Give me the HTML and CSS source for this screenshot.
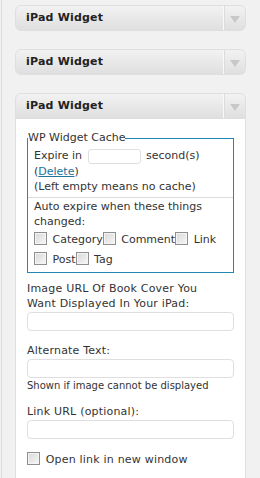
FILE: index.html
```html
<!DOCTYPE html>
<html lang="en">
<head>
    <meta charset="UTF-8">
    <title>iPad Widget</title>
    <link rel="stylesheet" href="styles.css">
</head>
<body>
    <div class="sidebar">
        <div class="widget">
            <div class="widget-top">
                <div class="widget-title">iPad Widget</div>
                <div class="widget-toggle"><span class="arrow"></span></div>
            </div>
        </div>

        <div class="widget">
            <div class="widget-top">
                <div class="widget-title">iPad Widget</div>
                <div class="widget-toggle"><span class="arrow"></span></div>
            </div>
        </div>

        <div class="widget open">
            <div class="widget-top">
                <div class="widget-title">iPad Widget</div>
                <div class="widget-toggle"><span class="arrow"></span></div>
            </div>
            <div class="widget-inside">
                <fieldset class="cache">
                    <legend>WP Widget Cache</legend>
                    <div class="cache-expire">
                        Expire in <input type="text" class="short"> second(s)<br>
                        (<a href="#">Delete</a>)<br>
                        (Left empty means no cache)
                    </div>
                    <div class="cache-auto">
                        Auto expire when these things changed:<br>
                        <label><input type="checkbox"> Category</label><label><input type="checkbox"> Comment</label><label><input type="checkbox"> Link</label>
                        <br>
                        <label><input type="checkbox"> Post</label><label><input type="checkbox"> Tag</label>
                    </div>
                </fieldset>

                <p class="field first">
                    <label>Image URL Of Book Cover You Want Displayed In Your iPad:</label>
                    <input type="text" class="wide">
                </p>
                <p class="field">
                    <label>Alternate Text:</label>
                    <input type="text" class="wide">
                    <small>Shown if image cannot be displayed</small>
                </p>
                <p class="field">
                    <label>Link URL (optional):</label>
                    <input type="text" class="wide">
                </p>
                <p class="field check">
                    <label><input type="checkbox"> Open link in new window</label>
                </p>
            </div>
        </div>
    </div>
</body>
</html>
```

FILE: styles.css
```css
body {
    margin: 0;
    background: #f1f1f1;
    font-family: 'DejaVu Sans', Verdana, sans-serif;
    font-size: 11px;
    color: #333;
}
.sidebar {
    border-left: 1px solid #dcdcdc;
    margin-left: 1px;
    padding: 5px 14px 0 13px;
    height: 473px;
    overflow: hidden;
}
.widget {
    margin-bottom: 18px;
}
.widget-top {
    display: flex;
    height: 24px;
    border: 1px solid #dfdfdf;
    border-radius: 6px;
    background: linear-gradient(to bottom, #f2f2f2, #dfdfdf);
}
.widget.open .widget-top {
    border-radius: 6px 6px 0 0;
}
.widget-title {
    flex: 1;
    padding-left: 10px;
    font-size: 11px;
    font-weight: bold;
    letter-spacing: 0.2px;
    line-height: 24px;
    color: #222;
}
.widget-toggle {
    width: 21px;
    border-left: 1px solid #f9f9f9;
    box-shadow: inset 1px 0 0 #dcdcdc;
    display: flex;
    align-items: center;
    justify-content: center;
}
.arrow {
    width: 0;
    height: 0;
    border-left: 5px solid transparent;
    border-right: 5px solid transparent;
    border-top: 7px solid #c8c8c8;
    margin-top: 2px;
}
.widget-inside {
    background: #fff;
    border: 1px solid #dfdfdf;
    border-top: none;
    padding: 12px 11px 10px;
    min-height: 340px;
}
fieldset.cache {
    border: 1px solid #2387b4;
    margin: 0;
    padding: 0;
}
fieldset.cache legend {
    padding: 0;
    margin-left: 0;
    line-height: 14px;
}
.cache-expire {
    padding: 3px 6px 3px;
    line-height: 15px;
    border-bottom: 1px solid #dcdcdc;
}
.cache-auto {
    padding: 1px 4px 3px 6px;
    line-height: 15px;
}
.cache-auto label {
    white-space: nowrap;
    display: inline-block;
    line-height: 19px;
    margin-top: 1px;
}
input.short {
    width: 51px;
    height: 13px;
    padding: 0;
    border: 1px solid #dfdfdf;
    border-radius: 3px;
    vertical-align: middle;
    margin: 0 2px;
}
a {
    color: #21759b;
}
input[type="checkbox"] {
    appearance: none;
    box-sizing: border-box;
    width: 13px;
    height: 13px;
    margin: 0 2px 0 0;
    vertical-align: -2px;
    border: 1px solid #8f8f8f;
    background: linear-gradient(135deg, #d8d8d8, #f7f7f7);
    box-shadow: inset 0 0 0 1px #f4f4f4;
}
.field {
    margin: 12px 0 0;
    line-height: 15px;
}
.field.first {
    margin-top: 8px;
}
.field.check {
    margin-top: 13px;
}
.field label {
    display: block;
    padding-right: 12px;
    letter-spacing: 0.2px;
}
input.wide {
    display: block;
    box-sizing: border-box;
    width: 100%;
    height: 19px;
    border: 1px solid #dfdfdf;
    border-radius: 4px;
    margin: 1px 0 0;
}
.field small {
    display: block;
    font-size: 10px;
    line-height: 13px;
    margin-top: 1px;
}
```
